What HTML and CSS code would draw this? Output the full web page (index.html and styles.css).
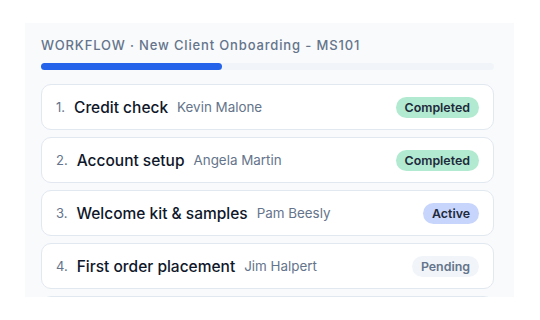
FILE: index.html
```html
<!DOCTYPE html>
<html lang="en">
<head>
  <meta charset="UTF-8">
  <title>Workflow</title>
  <link rel="stylesheet" href="styles.css">
</head>
<body>

  <div class="panel">
    <div class="label">WORKFLOW · New Client Onboarding - MS101</div>

    <div class="progress">
      <div class="progress-fill" style="width: 40%;"></div>
    </div>

    <div class="steps">
      <div class="step">
        <span class="num">1.</span>
        <span class="title">Credit check</span>
        <span class="who">Kevin Malone</span>
        <span class="badge done">Completed</span>
      </div>
      <div class="step">
        <span class="num">2.</span>
        <span class="title">Account setup</span>
        <span class="who">Angela Martin</span>
        <span class="badge done">Completed</span>
      </div>
      <div class="step">
        <span class="num">3.</span>
        <span class="title">Welcome kit &amp; samples</span>
        <span class="who">Pam Beesly</span>
        <span class="badge active">Active</span>
      </div>
      <div class="step">
        <span class="num">4.</span>
        <span class="title">First order placement</span>
        <span class="who">Jim Halpert</span>
        <span class="badge pending">Pending</span>
      </div>
      <!-- next step is cut off by the panel edge -->
      <div class="step"></div>
    </div>
  </div>

</body>
</html>
```

FILE: styles.css
```css
body {
  font-family: 'Inter', 'Liberation Sans', sans-serif;
  background-color: white;
  margin: 0;
  padding: 23px 0 0 25px;
}

.panel {
  width: 489px;
  height: 274px;
  box-sizing: border-box;
  padding: 14px 20px 0 16px;
  background-color: #f8fafc;
  overflow: hidden;
}

.label {
  font-size: 13px;
  line-height: 17px;
  font-weight: 500;
  letter-spacing: 0.85px;
  color: #64748b;
}

.progress {
  margin-top: 9px;
  height: 7px;
  border-radius: 4px;
  background-color: #f1f5f9;
}

.progress-fill {
  height: 100%;
  border-radius: 4px;
  background-color: #2563eb;
}

.steps {
  margin-top: 14px;
  display: flex;
  flex-direction: column;
  gap: 7px;
}

.step {
  height: 46px;
  flex-shrink: 0;
  box-sizing: border-box;
  display: flex;
  align-items: center;
  padding: 0 14px;
  background-color: white;
  border: 1px solid #e2e8f0;
  border-radius: 10px;
}

.num {
  font-size: 13px;
  color: #64748b;
  margin-right: 9px;
}

.title {
  font-size: 15.5px;
  font-weight: 500;
  color: #0f172a;
  margin-right: 9px;
}

.who {
  font-size: 13.4px;
  color: #64748b;
}

.badge {
  margin-left: auto;
  height: 21px;
  line-height: 21px;
  padding: 0 9px;
  border-radius: 11px;
  font-size: 12.4px;
  font-weight: 600;
  color: #1e293b;
}

.done {
  background-color: #b1ead0;
}

.active {
  background-color: #c7d5fd;
}

.pending {
  background-color: #f1f5f9;
  color: #64748b;
}
```
